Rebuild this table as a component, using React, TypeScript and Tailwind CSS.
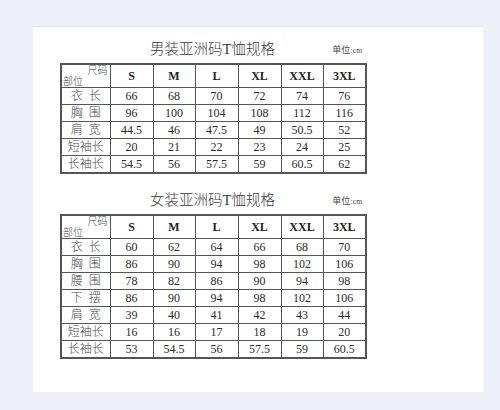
import React from 'react';

const sizes = ['S', 'M', 'L', 'XL', 'XXL', '3XL'];

const menRows: [string, string[]][] = [
  ['衣\u2002长', ['66', '68', '70', '72', '74', '76']],
  ['胸\u2002围', ['96', '100', '104', '108', '112', '116']],
  ['肩\u2002宽', ['44.5', '46', '47.5', '49', '50.5', '52']],
  ['短袖长', ['20', '21', '22', '23', '24', '25']],
  ['长袖长', ['54.5', '56', '57.5', '59', '60.5', '62']],
];

const womenRows: [string, string[]][] = [
  ['衣\u2002长', ['60', '62', '64', '66', '68', '70']],
  ['胸\u2002围', ['86', '90', '94', '98', '102', '106']],
  ['腰\u2002围', ['78', '82', '86', '90', '94', '98']],
  ['下\u2002摆', ['86', '90', '94', '98', '102', '106']],
  ['肩\u2002宽', ['39', '40', '41', '42', '43', '44']],
  ['短袖长', ['16', '16', '17', '18', '19', '20']],
  ['长袖长', ['53', '54.5', '56', '57.5', '59', '60.5']],
];

const cjk = { fontFamily: '"Liberation Serif", "Noto Sans CJK SC", serif' };

const SizeTable = ({ title, rows }: { title: string; rows: [string, string[]][] }) => (
  <div className="w-[305px]">
    <div className="flex items-end justify-between h-[26px]">
      <div className="w-[40px]" />
      <div className="text-[14.5px] leading-[20px] text-[#3a3a3a] font-light pb-[4px]" style={cjk}>
        {title}
      </div>
      <div className="w-[40px] text-right text-[9px] leading-[12px] text-[#444] pb-[6px] pr-[3px]" style={cjk}>
        单位:<span className="text-[7.5px]">cm</span>
      </div>
    </div>
    <table className="table-fixed border-collapse w-[305px] border-2 border-[#555]" style={cjk}>
      <colgroup>
        <col className="w-[49px]" />
        <col className="w-[43px]" />
        <col className="w-[42px]" />
        <col className="w-[43px]" />
        <col className="w-[43px]" />
        <col className="w-[42px]" />
        <col className="w-[43px]" />
      </colgroup>
      <thead>
        <tr className="h-[23px]">
          <th className="border border-[#555] p-0 font-normal">
            <div className="flex flex-col h-[22px] text-[10px] leading-[11px] text-[#444] font-light">
              <span className="self-end pr-[2px]">尺码</span>
              <span className="self-start pl-[1px]">部位</span>
            </div>
          </th>
          {sizes.map((s) => (
            <th key={s} className="border border-[#555] p-0 text-[12px] font-bold text-[#222]">
              {s}
            </th>
          ))}
        </tr>
      </thead>
      <tbody>
        {rows.map(([label, vals]) => (
          <tr key={label} className="h-[17px]">
            <td className="border border-[#555] p-0 text-center text-[12px] leading-[16px] text-[#4a4a4a] font-light whitespace-pre">
              {label}
            </td>
            {vals.map((v, i) => (
              <td key={i} className="border border-[#555] p-0 text-center text-[12px] leading-[16px] text-[#2a2a2a]">
                {v}
              </td>
            ))}
          </tr>
        ))}
      </tbody>
    </table>
  </div>
);

export default function App() {
  return (
    <div className="w-[500px] h-[410px] bg-[#edf1f7] pt-[26px] pl-[33px]">
      <div className="w-[450px] h-[366px] bg-white border-t border-[#e3e6ea] pt-[10px] pl-[27px]">
        <SizeTable title="男装亚洲码T恤规格" rows={menRows} />
        <div className="h-[14px]" />
        <SizeTable title="女装亚洲码T恤规格" rows={womenRows} />
      </div>
    </div>
  );
}
